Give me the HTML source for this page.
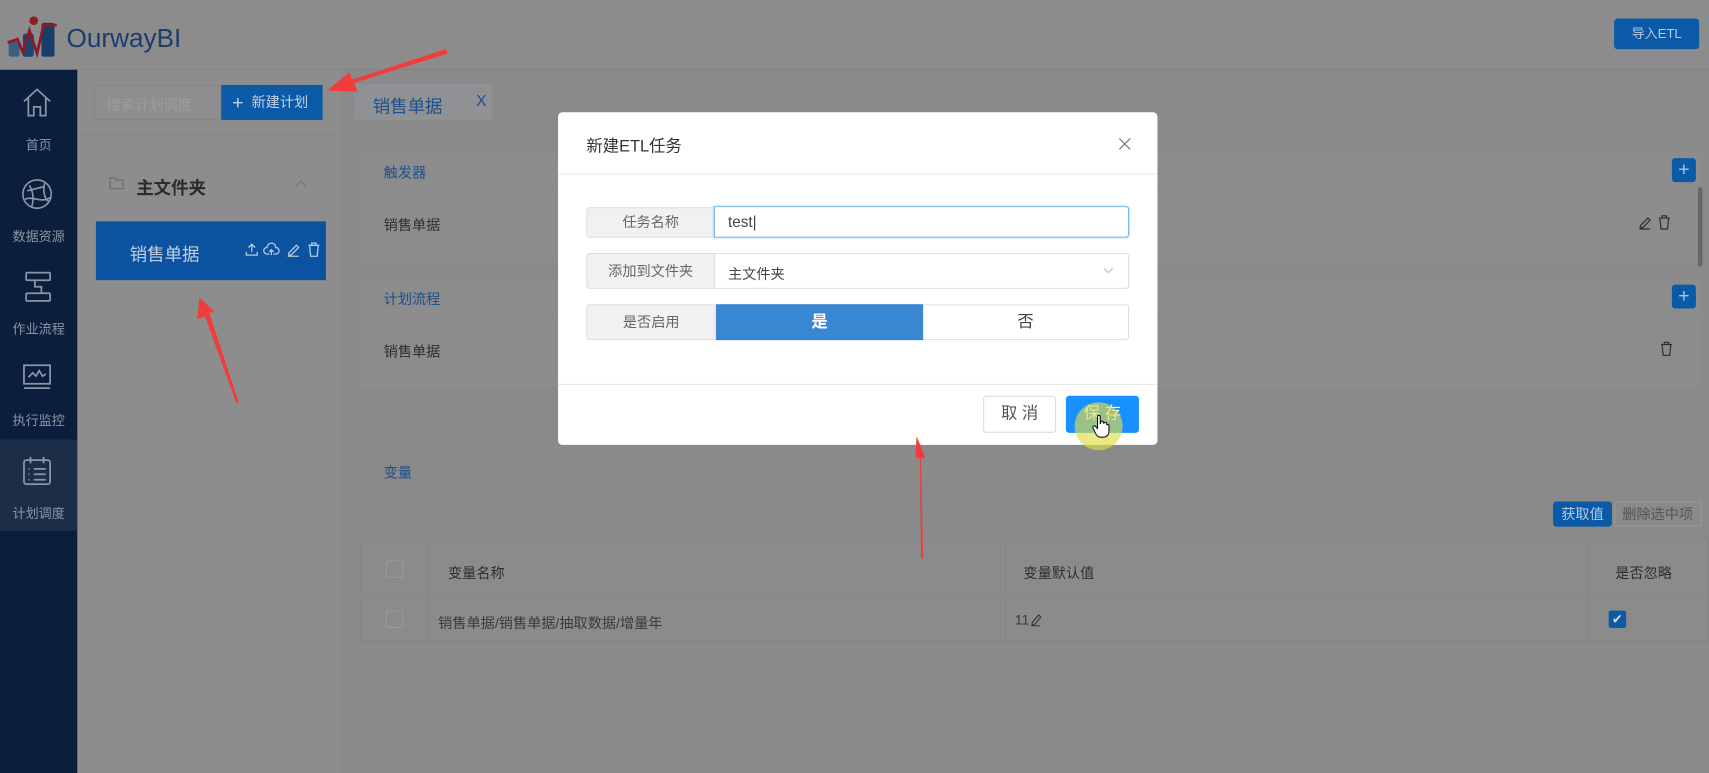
<!DOCTYPE html>
<html><head><meta charset="utf-8">
<style>
*{margin:0;padding:0;box-sizing:border-box}
html,body{width:1709px;height:773px;overflow:hidden;background:#8a8a8a}
body{font-family:"Liberation Sans","Noto Sans CJK SC",sans-serif}
#w{position:absolute;left:0;top:0;width:1568px;height:709px;transform:scale(1.0899,1.0903);transform-origin:0 0;background:#8a8a8a}
.a{position:absolute}
.t{position:absolute;white-space:nowrap}
.nav{color:#8b96a6;font-size:12px;width:71px;text-align:center;left:0}
.blue{background:#0b5aa8}
.ttl{color:#1d4f8c;font-size:13px}
.gray{color:#2e2e2e;font-size:13px}
.plus{width:22px;height:22px;border-radius:3px;background:#0b5aa8;color:#aac4e6;font-size:18px;line-height:21px;text-align:center}
.lab{background:#f1f1f1;border:1px solid #ddd;color:#666;font-size:13px;text-align:center;border-radius:3px 0 0 3px}
</style></head><body><div id="w">
<div class="a" style="left:0;top:0;width:1568px;height:64px;background:#8c8c8c;border-bottom:1px solid #858585"></div>
<svg class="a" style="left:6px;top:13px" width="50" height="42" viewBox="0 0 50 42">
<rect x="2" y="25" width="10" height="14" rx="2" fill="#3c5f7f"/>
<rect x="15" y="18" width="10" height="21" rx="2" fill="#1d4570"/>
<circle cx="25" cy="6" r="4" fill="#8a1f2a"/>
<rect x="32" y="8" width="12" height="31" rx="2" fill="#173d6a"/>
<polyline points="1,26 10,23 15,35 21,15 28,36 34,10 46,10" fill="none" stroke="#8b1a24" stroke-width="2.5"/>
</svg>
<div class="t" style="left:61px;top:22px;font-size:24px;color:#1c3d6c">OurwayBI</div>
<div class="a blue" style="left:1481px;top:17px;width:78px;height:28px;border-radius:3px;color:#b9c9de;font-size:12px;text-align:center;line-height:28px">导入ETL</div>
<div class="a" style="left:0;top:64px;width:71px;height:645px;background:#0b1e3b"></div>
<div class="a" style="left:0;top:403px;width:71px;height:84px;background:#1b2d47"></div>
<svg class="a" style="left:19px;top:79px" width="30" height="30" viewBox="0 0 30 30" fill="none" stroke="#8b96a6" stroke-width="1.6"><path d="M3 14 L15 3 L27 14 M7 11 V27 H12 V19 H18 V27 H23 V11"/></svg>
<div class="t nav" style="top:124px">首页</div>
<svg class="a" style="left:19px;top:163px" width="30" height="30" viewBox="0 0 30 30" fill="none" stroke="#8b96a6" stroke-width="1.5"><circle cx="15" cy="15" r="13"/><path d="M4 20 C10 16 20 24 27 18 M8 7 C12 14 12 20 10 27 M22 5 C20 12 22 20 26 22 M6 12 L22 8"/></svg>
<div class="t nav" style="top:208px">数据资源</div>
<svg class="a" style="left:22px;top:248px" width="26" height="30" viewBox="0 0 26 30" fill="none" stroke="#8b96a6" stroke-width="1.6"><rect x="2" y="2" width="22" height="7" rx="1"/><rect x="2" y="21" width="22" height="7" rx="1"/><path d="M10 9 V15 H16 V21"/></svg>
<div class="t nav" style="top:293px">作业流程</div>
<svg class="a" style="left:20px;top:333px" width="28" height="26" viewBox="0 0 28 26" fill="none" stroke="#8b96a6" stroke-width="1.6"><rect x="2" y="2" width="24" height="17"/><path d="M2 23 H26 M6 13 L10 9 L13 12 L16 7 L19 12 L22 10"/></svg>
<div class="t nav" style="top:377px">执行监控</div>
<svg class="a" style="left:20px;top:418px" width="28" height="28" viewBox="0 0 28 28" fill="none" stroke="#8b96a6" stroke-width="1.6"><rect x="2" y="4" width="24" height="22" rx="2"/><path d="M8 1 V7 M20 1 V7 M11 12 H22 M11 17 H22 M11 22 H22 M6 12 h1 M6 17 h1 M6 22 h1"/></svg>
<div class="t nav" style="top:462px">计划调度</div>
<div class="a" style="left:71px;top:64px;width:242px;height:645px;background:#8d8d8d"></div>
<div class="a" style="left:86px;top:78px;width:117px;height:32px;border:1px solid #868686;background:#8e8e8e"></div>
<div class="t" style="left:98px;top:86px;font-size:13px;color:#9d9d9d">搜索计划调度</div>
<div class="a blue" style="left:203px;top:78px;width:93px;height:32px;color:#c3d1e4;font-size:13px;line-height:32px;padding-left:10px"><span style="font-size:18px;vertical-align:-2px">+</span>&nbsp;&nbsp;新建计划</div>
<div class="a" style="left:71px;top:123px;width:242px;height:1px;background:#878787"></div>
<svg class="a" style="left:100px;top:162px" width="14" height="12" viewBox="0 0 14 12" fill="none" stroke="#6a6a6a"><path d="M1 1 H5 L6 3 H13 V11 H1 Z"/></svg>
<div class="t" style="left:125px;top:159px;font-size:16px;font-weight:bold;color:#2b2b2b">主文件夹</div>
<svg class="a" style="left:270px;top:164px" width="12" height="8" viewBox="0 0 12 8" fill="none" stroke="#777"><path d="M1 7 L6 2 L11 7"/></svg>
<div class="a" style="left:88px;top:203px;width:211px;height:54px;background:#0b53a0"></div>
<div class="t" style="left:119px;top:220px;font-size:16px;color:#c3d0e0">销售单据</div>
<svg class="a" style="left:225px;top:222px" width="72" height="14" viewBox="0 0 72 14" fill="none" stroke="#b9c8dc" stroke-width="1.2">
<path d="M6 9 V2 M3 5 L6 2 L9 5 M1 9 V12 H11 V9"/>
<path d="M22 11 H20 A3 3 0 0 1 20 5 A4 4 0 0 1 28 5 A3 3 0 0 1 28 11 H26 M24 12 V7 M22 9 L24 7 L26 9"/>
<path d="M40 10 L47 3 L49 5 L42 12 L40 12 Z M39 13 H49"/>
<path d="M58 3 H68 M61 3 V1 H65 V3 M59 3 L60 13 H66 L67 3"/>
</svg>
<div class="a" style="left:325px;top:77px;width:127px;height:33px;background:#8f9195"></div>
<div class="t" style="left:342px;top:84px;font-size:16px;color:#1d4f8c">销售单据</div>
<div class="t" style="left:437px;top:84px;font-size:14px;color:#1d4f8c">X</div>
<div class="a" style="left:330px;top:140px;width:1230px;height:100px;background:#8c8c8c"></div>
<div class="a" style="left:330px;top:170px;width:1230px;height:1px;background:#878787"></div>
<div class="t ttl" style="left:352px;top:148px">触发器</div>
<div class="a plus" style="left:1534px;top:145px">+</div>
<div class="t gray" style="left:352px;top:196px">销售单据</div>
<svg class="a" style="left:1503px;top:197px" width="32" height="14" viewBox="0 0 32 14" fill="none" stroke="#2e2e2e" stroke-width="1.1">
<path d="M2 10 L9 3 L11 5 L4 12 L2 12 Z M1 13 H11"/>
<path d="M19 3 H29 M22 3 V1 H26 V3 M20 3 L21 13 H27 L28 3"/></svg>
<div class="a" style="left:1558px;top:172px;width:4px;height:72px;background:#666"></div>
<div class="a" style="left:330px;top:256px;width:1230px;height:100px;background:#8c8c8c"></div>
<div class="a" style="left:330px;top:287px;width:1230px;height:1px;background:#878787"></div>
<div class="t ttl" style="left:352px;top:264px">计划流程</div>
<div class="a plus" style="left:1534px;top:261px">+</div>
<div class="t gray" style="left:352px;top:312px">销售单据</div>
<svg class="a" style="left:1522px;top:313px" width="14" height="14" viewBox="0 0 14 14" fill="none" stroke="#2e2e2e" stroke-width="1.1"><path d="M2 3 H12 M5 3 V1 H9 V3 M3 3 L4 13 H10 L11 3"/></svg>
<div class="t ttl" style="left:352px;top:423px">变量</div>
<div class="a" style="left:330px;top:446px;width:1238px;height:1px;background:#868686"></div>
<div class="a blue" style="left:1425px;top:460px;width:54px;height:23px;border-radius:3px;color:#b9c9de;font-size:13px;text-align:center;line-height:23px">获取值</div>
<div class="a" style="left:1481px;top:460px;width:80px;height:23px;border:1px solid #999;color:#555;font-size:13px;text-align:center;line-height:21px">删除选中项</div>
<div class="a" style="left:330px;top:494px;width:1238px;height:94px;border:1px solid #858585;background:#8b8b8b"></div>
<div class="a" style="left:330px;top:548px;width:1238px;height:1px;background:#858585"></div>
<div class="a" style="left:393px;top:494px;width:1px;height:94px;background:#858585"></div>
<div class="a" style="left:922px;top:494px;width:1px;height:94px;background:#858585"></div>
<div class="a" style="left:1456px;top:494px;width:1px;height:94px;background:#858585"></div>
<div class="a" style="left:354px;top:514px;width:16px;height:16px;border:1px solid #9a9a9a;border-radius:2px"></div>
<div class="a" style="left:354px;top:560px;width:16px;height:16px;border:1px solid #9a9a9a;border-radius:2px"></div>
<div class="t gray" style="left:411px;top:515px">变量名称</div>
<div class="t gray" style="left:939px;top:515px">变量默认值</div>
<div class="t gray" style="left:1482px;top:515px">是否忽略</div>
<div class="t" style="left:402px;top:561px;font-size:13px;color:#3a3a3a">销售单据/销售单据/抽取数据/增量年</div>
<div class="t" style="left:931px;top:561px;font-size:13px;color:#3a3a3a">11</div>
<svg class="a" style="left:945px;top:562px" width="12" height="13" viewBox="0 0 12 13" fill="none" stroke="#3a3a3a" stroke-width="1.1"><path d="M2 9 L8 2 L10 4 L4 11 L2 11 Z M1 12 H9"/></svg>
<div class="a blue" style="left:1476px;top:560px;width:16px;height:16px;border-radius:2px;color:#ddd;font-size:12px;text-align:center;line-height:16px">✔</div>
<div class="a" style="left:512px;top:103px;width:550px;height:305px;background:#fff;border-radius:4px"></div>
<div class="t" style="left:538px;top:123px;font-size:15px;color:#333">新建ETL任务</div>
<svg class="a" style="left:1026px;top:126px" width="12" height="12" viewBox="0 0 12 12" stroke="#888" stroke-width="1.3"><path d="M1 1 L11 11 M11 1 L1 11"/></svg>
<div class="a" style="left:512px;top:159px;width:550px;height:1px;background:#e8e8e8"></div>
<div class="a lab" style="left:538px;top:190px;width:118px;height:28px;line-height:26px">任务名称</div>
<div class="a" style="left:655px;top:189px;width:381px;height:29px;border:1px solid #7ab6e6;border-radius:0 3px 3px 0;box-shadow:0 0 2px #a8d0f0"></div>
<div class="t" style="left:668px;top:195px;font-size:14px;color:#444">test|</div>
<div class="a lab" style="left:538px;top:232px;width:118px;height:33px;line-height:31px">添加到文件夹</div>
<div class="a" style="left:655px;top:232px;width:381px;height:33px;border:1px solid #ddd;border-radius:0 3px 3px 0"></div>
<div class="t" style="left:668px;top:241px;font-size:13px;color:#444">主文件夹</div>
<svg class="a" style="left:1012px;top:245px" width="10" height="6" viewBox="0 0 10 6" fill="none" stroke="#bbb"><path d="M1 1 L5 5 L9 1"/></svg>
<div class="a lab" style="left:538px;top:279px;width:119px;height:33px;line-height:31px">是否启用</div>
<div class="a" style="left:657px;top:279px;width:190px;height:33px;background:#3986d2;color:#fff;font-size:15px;font-weight:bold;text-align:center;line-height:33px">是</div>
<div class="a" style="left:847px;top:279px;width:189px;height:33px;border:1px solid #ddd;border-left:none;border-radius:0 3px 3px 0;color:#444;font-size:15px;text-align:center;line-height:31px">否</div>
<div class="a" style="left:512px;top:352px;width:550px;height:1px;background:#e8e8e8"></div>
<div class="a" style="left:902px;top:363px;width:67px;height:34px;border:1px solid #ddd;border-radius:3px;color:#555;font-size:15px;text-align:center;line-height:32px">取 消</div>
<div class="a" style="left:978px;top:363px;width:67px;height:34px;background:#1890ff;border-radius:3px;color:#fff;font-size:15px;text-align:center;line-height:34px">保 存</div>
<div class="a" style="left:986px;top:369px;width:44px;height:44px;border-radius:50%;background:rgba(225,220,70,0.65)"></div>
<svg class="a" style="left:1002px;top:380px" width="16" height="22" viewBox="0 0 16 22"><path d="M5 2 C5 0.5 7.5 0.5 7.5 2 V9 L8 7 C8.5 6 10.5 6 10.5 8 L11 8 C11.5 7 13.5 7 13.5 9 V10 C14 9 16 9 15.5 11 V16 C15.5 19 13 21 10 21 H8 C6 21 4.5 20 3.5 18 L0.8 12.5 C0.2 11 2 10 3 11 L5 13 Z" fill="#fff" stroke="#111" stroke-width="1"/></svg>
<svg class="a" style="left:0;top:0" width="1568" height="709">
<polygon points="411,49 325,76 328,84 300,83 321,66 323,73 409,45" fill="#f23b3b"/>
<polygon points="217,370 188,290 181,293 183,273 197,286 192,287 219,369" fill="#f23b3b"/>
<polygon points="847,512 845,420 840,420 841,400 849,420 844,420 845,512" fill="#f23b3b"/>
</svg>
</div></body></html>
